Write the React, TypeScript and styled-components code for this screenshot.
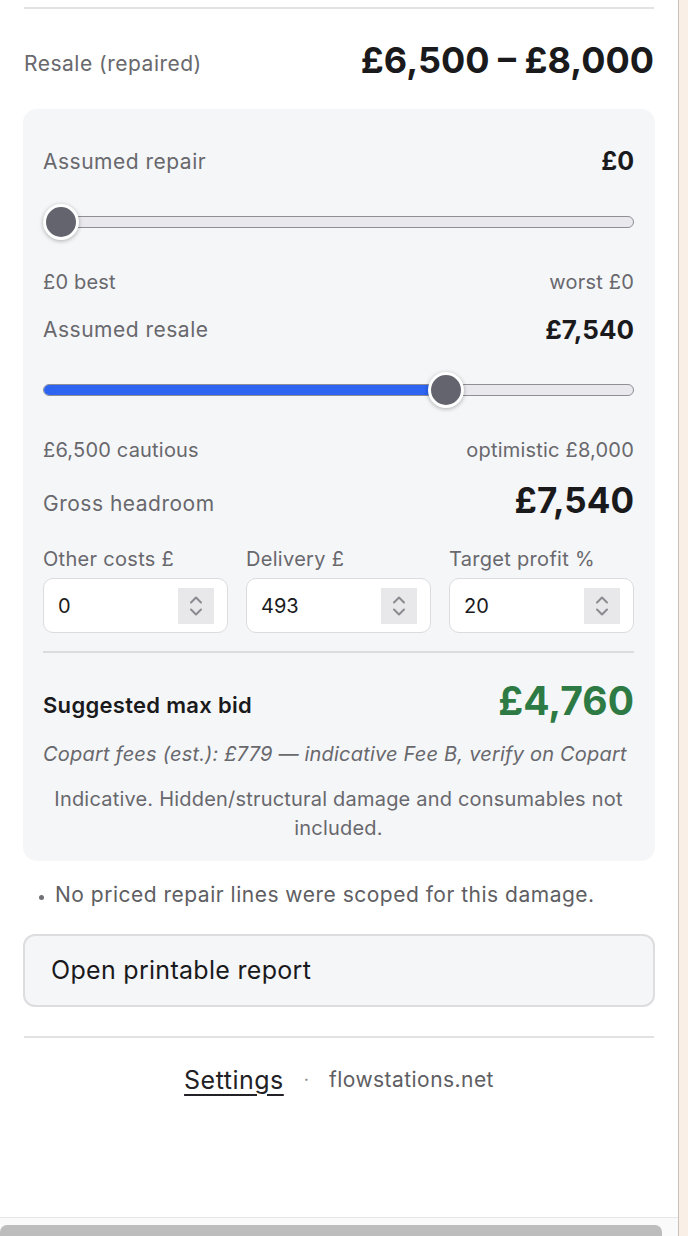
import styled, { createGlobalStyle } from 'styled-components';

const GlobalStyle = createGlobalStyle`
  html, body {
    margin: 0;
    padding: 0;
    background: #ffffff;
  }
  body {
    font-family: Inter, "Noto Sans", "Liberation Sans", sans-serif;
    color: #1b1b1d;
    -webkit-font-smoothing: antialiased;
  }
`;

const fields = [
  { label: 'Other costs £', value: '0' },
  { label: 'Delivery £', value: '493' },
  { label: 'Target profit %', value: '20' },
];

const THUMB = 36;

// position along the track, thumb kept inside the ends
function Slider({ min, max, value }: { min: number; max: number; value: number }) {
  const ratio = max > min ? (value - min) / (max - min) : 0;
  const pos = `calc(${THUMB / 2}px + (100% - ${THUMB}px) * ${ratio})`;
  return (
    <StyledSlider>
      <StyledTrack>
        <StyledFill style={{ width: ratio > 0 ? pos : 0 }} />
      </StyledTrack>
      <StyledThumb style={{ left: pos }} />
    </StyledSlider>
  );
}

function Spinner() {
  return (
    <StyledSpin>
      <svg width='14' height='26' viewBox='0 0 14 26' fill='none'>
        <path
          d='M2 9.5 L7 4.5 L12 9.5'
          stroke='#8a8a90'
          strokeWidth='2'
          strokeLinecap='round'
          strokeLinejoin='round'
        />
        <path
          d='M2 16.5 L7 21.5 L12 16.5'
          stroke='#8a8a90'
          strokeWidth='2'
          strokeLinecap='round'
          strokeLinejoin='round'
        />
      </svg>
    </StyledSpin>
  );
}

export default function App() {
  return (
    <>
      <GlobalStyle />
      <StyledPage>
        <StyledPanel>
          <StyledContent>
            <StyledRule />

            {/* Resale range */}
            <StyledResaleRow>
              <StyledLabel>Resale (repaired)</StyledLabel>
              <StyledValue $size={36}>£6,500 – £8,000</StyledValue>
            </StyledResaleRow>

            {/* Calculator card */}
            <StyledCard>
              <StyledHeadRow $mt={0}>
                <StyledLabel>Assumed repair</StyledLabel>
                <StyledValue $size={25}>£0</StyledValue>
              </StyledHeadRow>
              <Slider min={0} max={0} value={0} />
              <StyledCaptionRow>
                <span>£0 best</span>
                <span>worst £0</span>
              </StyledCaptionRow>

              <StyledHeadRow $mt={19}>
                <StyledLabel>Assumed resale</StyledLabel>
                <StyledValue $size={26}>£7,540</StyledValue>
              </StyledHeadRow>
              <Slider min={6500} max={8000} value={7540} />
              <StyledCaptionRow>
                <span>£6,500 cautious</span>
                <span>optimistic £8,000</span>
              </StyledCaptionRow>

              <StyledHeadroomRow>
                <StyledLabel>Gross headroom</StyledLabel>
                <StyledValue $size={35}>£7,540</StyledValue>
              </StyledHeadroomRow>

              <StyledFieldGrid>
                {fields.map((field) => (
                  <StyledField key={field.label}>
                    <StyledFieldLabel>{field.label}</StyledFieldLabel>
                    <StyledInputBox>
                      <span>{field.value}</span>
                      <Spinner />
                    </StyledInputBox>
                  </StyledField>
                ))}
              </StyledFieldGrid>

              <StyledCardRule />

              <StyledBidRow>
                <StyledBidLabel>Suggested max bid</StyledBidLabel>
                <StyledBidValue>£4,760</StyledBidValue>
              </StyledBidRow>
              <StyledFees>
                Copart fees (est.): £779 — indicative Fee B, verify on Copart
              </StyledFees>
              <StyledDisclaimer>
                Indicative. Hidden/structural damage and consumables not
                included.
              </StyledDisclaimer>
            </StyledCard>

            <StyledNotes>
              <li>No priced repair lines were scoped for this damage.</li>
            </StyledNotes>

            <StyledReportButton type='button'>
              Open printable report
            </StyledReportButton>

            <StyledRule $mt={29} />

            <StyledFooter>
              <StyledFooterLink href='#'>Settings</StyledFooterLink>
              <StyledDot>·</StyledDot>
              <StyledFooterText>flowstations.net</StyledFooterText>
            </StyledFooter>
          </StyledContent>

          <StyledScrollArea>
            <StyledScrollThumb />
          </StyledScrollArea>
        </StyledPanel>
        <StyledSideStrip />
      </StyledPage>
    </>
  );
}

const StyledPage = styled.div`
  display: flex;
  flex-direction: row;
  width: 688px;
  height: 1236px;
  overflow: hidden;
`;

const StyledPanel = styled.div`
  display: flex;
  flex-direction: column;
  width: 679px;
  height: 100%;
  background: #ffffff;
  border-right: 1px solid #cbc1b9;
  box-sizing: border-box;
`;

const StyledSideStrip = styled.div`
  flex: 1;
  background: #f9efe6;
`;

const StyledContent = styled.div`
  display: flex;
  flex-direction: column;
  padding: 7px 24px 0 24px;
`;

const StyledRule = styled.div<{ $mt?: number }>`
  height: 2px;
  background: #e2e2e4;
  margin-top: ${({ $mt }) => $mt ?? 0}px;
`;

const StyledResaleRow = styled.div`
  display: flex;
  align-items: center;
  justify-content: space-between;
  padding: 33px 0 31px 0;
  height: 36px;

  & > span:first-child {
    margin-top: 7px;
  }
`;

const StyledCard = styled.div`
  display: flex;
  flex-direction: column;
  margin: 0 -1px;
  padding: 37px 21px 18px 20px;
  background: #f5f6f8;
  border-radius: 14px;
`;

const StyledHeadRow = styled.div<{ $mt: number }>`
  display: flex;
  align-items: center;
  justify-content: space-between;
  height: 30px;
  margin-top: ${({ $mt }) => $mt}px;
`;

const StyledLabel = styled.span`
  font-size: 21px;
  letter-spacing: 0.5px;
  color: #68686d;
`;

const StyledValue = styled.span<{ $size: number }>`
  font-size: ${({ $size }) => $size}px;
  font-weight: 700;
  color: #1a1a1c;
`;

const StyledSlider = styled.div`
  position: relative;
  height: 40px;
  margin-top: 26px;
  display: flex;
  align-items: center;
`;

const StyledTrack = styled.div`
  position: relative;
  width: 100%;
  height: 12px;
  box-sizing: border-box;
  border: 1.5px solid #8e8e95;
  border-radius: 6px;
  background: #e8e8ed;
  overflow: hidden;
`;

const StyledFill = styled.div`
  height: 100%;
  background: #2d64f2;
`;

const StyledThumb = styled.div`
  position: absolute;
  top: 50%;
  width: ${THUMB}px;
  height: ${THUMB}px;
  box-sizing: border-box;
  border-radius: 50%;
  background: #64646f;
  border: 3.5px solid #ffffff;
  box-shadow: 0 1px 4px rgba(0, 0, 0, 0.3);
  transform: translate(-50%, -50%);
`;

const StyledCaptionRow = styled.div`
  display: flex;
  justify-content: space-between;
  margin-top: 27px;
  height: 26px;
  line-height: 26px;
  font-size: 20px;
  letter-spacing: 0.2px;
  color: #68686d;
`;

const StyledHeadroomRow = styled.div`
  display: flex;
  align-items: center;
  justify-content: space-between;
  height: 40px;
  margin-top: 17px;

  & > span:first-child {
    margin-top: 6px;
  }
`;

const StyledFieldGrid = styled.div`
  display: grid;
  grid-template-columns: 1fr 1fr 1fr;
  gap: 18px;
  margin-top: 27px;
`;

const StyledField = styled.div`
  display: flex;
  flex-direction: column;
  gap: 7px;
`;

const StyledFieldLabel = styled.span`
  font-size: 20px;
  line-height: 24px;
  letter-spacing: 0.3px;
  color: #68686d;
`;

const StyledInputBox = styled.div`
  display: flex;
  align-items: center;
  justify-content: space-between;
  height: 55px;
  box-sizing: border-box;
  padding: 0 13px 0 14px;
  background: #ffffff;
  border: 1.5px solid #dcdcdf;
  border-radius: 10px;
  font-size: 20px;
  color: #1a1a1c;
`;

const StyledSpin = styled.div`
  display: flex;
  align-items: center;
  justify-content: center;
  width: 36px;
  height: 36px;
  background: #e8e8ea;
`;

const StyledCardRule = styled.div`
  height: 1.5px;
  background: #dcdcdf;
  margin-top: 18px;
`;

const StyledBidRow = styled.div`
  display: flex;
  align-items: center;
  justify-content: space-between;
  height: 48px;
  margin-top: 24px;
`;

const StyledBidLabel = styled.span`
  font-size: 22px;
  font-weight: 600;
  letter-spacing: 0.3px;
  color: #1a1a1c;
  margin-top: 8px;
`;

const StyledBidValue = styled.span`
  font-size: 39px;
  font-weight: 700;
  color: #2e7a44;
`;

const StyledFees = styled.p`
  margin: 16px 0 0 0;
  font-size: 20px;
  line-height: 26px;
  letter-spacing: 0.2px;
  font-style: italic;
  color: #68686d;
  white-space: nowrap;
`;

const StyledDisclaimer = styled.p`
  margin: 18px 0 0 0;
  font-size: 20px;
  line-height: 29px;
  letter-spacing: 0.2px;
  text-align: center;
  color: #68686d;
`;

const StyledNotes = styled.ul`
  margin: 20px 0 0 0;
  padding-left: 31px;
  font-size: 21px;
  line-height: 28px;
  letter-spacing: 0.5px;
  color: #5e5e63;

  li::marker {
    font-size: 14px;
    color: #6f6f74;
  }
`;

const StyledReportButton = styled.button`
  margin: 25px -1px 0 -1px;
  height: 73px;
  padding: 0 0 0 26px;
  text-align: left;
  font-family: inherit;
  font-size: 25px;
  letter-spacing: 0.3px;
  color: #1a1a1c;
  background: #f5f6f8;
  border: 2px solid #dddde0;
  border-radius: 12px;
`;

const StyledFooter = styled.div`
  display: flex;
  align-items: center;
  justify-content: center;
  gap: 20px;
  margin-top: 27px;
  height: 30px;
`;

const StyledFooterLink = styled.a`
  font-size: 25px;
  letter-spacing: 0.5px;
  color: #222226;
  text-decoration: underline;
  text-underline-offset: 5px;
  text-decoration-thickness: 1.5px;
`;

const StyledDot = styled.span`
  font-size: 18px;
  color: #8a8a8f;
`;

const StyledFooterText = styled.span`
  font-size: 21px;
  letter-spacing: 0.45px;
  color: #5e5e63;
`;

const StyledScrollArea = styled.div`
  margin-top: auto;
  height: 19px;
  border-top: 1.5px solid #e6e6e8;
  background: #fafafa;
  display: flex;
  align-items: flex-end;
  box-sizing: border-box;
`;

const StyledScrollThumb = styled.div`
  width: 662px;
  height: 11px;
  background: #bdbdbd;
  border-radius: 7px 7px 0 0;
`;
